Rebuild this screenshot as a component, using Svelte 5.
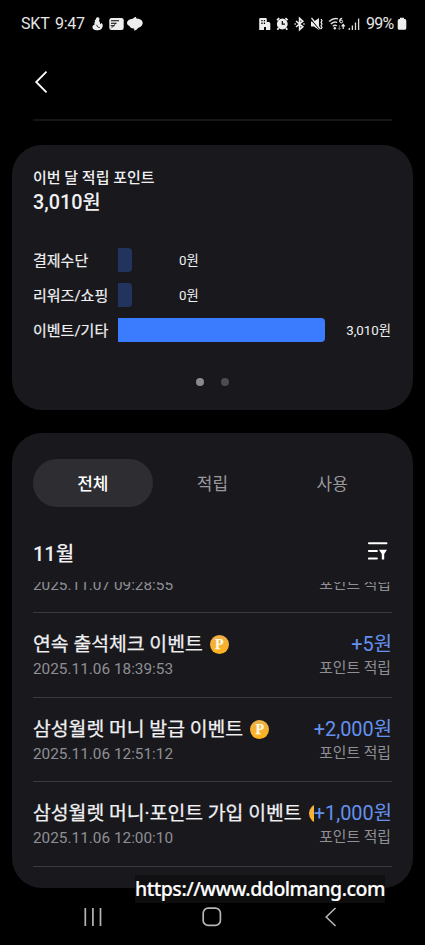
<script>
  let tab = $state('전체')

  const tabs = ['전체', '적립', '사용']

  const bars = [
    { name: '결제수단', value: '0원', width: 14, empty: true },
    { name: '리워즈/쇼핑', value: '0원', width: 14, empty: true },
    { name: '이벤트/기타', value: '3,010원', width: 207, empty: false }
  ]

  const items = [
    { title: '연속 출석체크 이벤트', date: '2025.11.06 18:39:53', amount: '+5원' },
    { title: '삼성월렛 머니 발급 이벤트', date: '2025.11.06 12:51:12', amount: '+2,000원' },
    { title: '삼성월렛 머니·포인트 가입 이벤트', date: '2025.11.06 12:00:10', amount: '+1,000원' }
  ]
</script>

<div class="screen">
  <div class="status">
    <div class="status-left">
      <span class="carrier">SKT</span>
      <span class="clock">9:47</span>
      <svg class="apps" width="54" height="18" viewBox="0 0 54 18" fill="#eee">
        <!-- tap / water drop -->
        <path d="M6.300 2.300c1.700-.2 2.700 1.300 2 2.700-.3.600-.3 1 .1 1.500.8.900.9 1.900.5 3l1.700-1.500 1 1.200c.5 3.700-1.300 5.800-4.600 6-3.600.2-6-1.500-5.500-3.800.3-1.200 1.300-1.600 2.300-2-.7-1.300-.5-2.300.4-3.200l-.6-1.200 1.300-.4c.1-1.200.5-2 1.400-2.300z" />
        <path d="M5.800 9.800c.1 1.700 1.200 2.800 3 2.700" fill="none" stroke="#000" stroke-width=".8" />
        <!-- news card -->
        <rect x="18.300" y="3" width="14.400" height="12" rx="2.200" />
        <path d="M20 5.700h8M20 8.300h5.500M19.600 10.800h4" stroke="#000" stroke-width="1.100" />
        <path d="M20.300 13.300l4.500-5" stroke="#000" stroke-width=".7" />
        <!-- swirl -->
        <path d="M45 1.800l.3 1.700c3.300.1 5.700 1.300 6.300 3.500.6 2.700-1.500 5.200-4.600 5.900-.9 1.300-2.100 2.300-3.700 2.800l-.2-2.200c-2.500.2-4.300-.8-4.500-2.400-1.500-.4-2.500-1.500-2.600-3C36.200 5 39 4 41.300 4 42.300 3 43.500 2.200 45 1.800z" />
      </svg>
    </div>
    <div class="status-right">
      <svg width="104" height="18" viewBox="0 0 104 18" fill="#eee">
        <!-- buildings -->
        <path d="M1.200 4.200q0-1.200 1.200-1.200h5.200q1.200 0 1.200 1.200V7h2q1.500 0 1.500 1.500V15H8v-3H6v3H1.200z" />
        <path d="M3.300 5h1.300v1.300H3.300zM5.800 5h1.300v1.300H5.800zM3.300 7.600h1.300v1.300H3.300zM5.800 7.600h1.300v1.300H5.800z" fill="#000" />
        <!-- alarm -->
        <circle cx="24.300" cy="9" r="5.400" />
        <path d="M19 5.200l2.200-2M29.600 5.200l-2.200-2M20.600 13l-1.200 1.800M28 13l1.200 1.800" stroke="#eee" stroke-width="1.800" />
        <path d="M24.300 6v3.200h2.600" fill="none" stroke="#000" stroke-width="1.200" />
        <!-- bluetooth -->
        <path d="M38 6l6.800 5.800-3.200 2.900V3.300l3.200 2.900L38 12M36.500 9h1.300M45.300 9h1.300" fill="none" stroke="#eee" stroke-width="1.600" />
        <!-- muted sound -->
        <path d="M53 6.600h3l5-3.600v12l-5-3.600h-3z" />
        <path d="M53 4.500l9 10.500" stroke="#000" stroke-width="1.100" />
        <path d="M53.500 3l9 11" stroke="#eee" stroke-width="1.200" />
        <path d="M63 4l1 1.700-1 1.700 1 1.700-1 1.700 1 1.700-1 1.500" fill="none" stroke="#eee" stroke-width="1.200" />
        <!-- wifi 6 -->
        <path d="M71 6.500q4.500-4 9-2.700M72.800 9q3.300-3 6.500-1.600M74.800 11.300q2-1.800 4-.5" fill="none" stroke="#ddd" stroke-width="1.400" />
        <circle cx="76.800" cy="13.300" r="1.200" />
        <path d="M84.200 3.400q-2.600 0-2.600 3.300" fill="none" stroke="#eee" stroke-width="1.100" />
        <circle cx="83.200" cy="6.500" r="1.400" fill="none" stroke="#eee" />
        <path d="M81.300 10v4.500M79.800 13l1.500 1.700 1.500-1.700" fill="none" stroke="#777" />
        <path d="M85.200 14V9.500M83.600 11.300l1.600-1.800 1.600 1.800" fill="none" stroke="#eee" stroke-width="1.200" />
        <!-- signal -->
        <path d="M91.300 13v2M94.400 10.500V15M97.500 7.500V15M100.600 3.500V15" stroke="#ddd" stroke-width="1.300" />
      </svg>
      <span class="percent">99%</span>
      <svg class="battery" width="10" height="14" viewBox="0 0 10 14">
        <path d="M3 .8h4v1.300h.7q1.600 0 1.600 1.600v7.500q0 1.600-1.600 1.600H2.300Q.7 12.800.7 11.200V3.700q0-1.600 1.600-1.600H3z" fill="#eee" />
      </svg>
    </div>
  </div>

  <div class="topbar">
    <svg width="14" height="24" viewBox="0 0 14 24">
      <path d="M12.500 1.700L2.200 12l10.300 10.300" fill="none" stroke="#fff" stroke-width="1.800" />
    </svg>
  </div>
  <div class="topline"></div>

  <section class="card summary">
    <p class="label">이번 달 적립 포인트</p>
    <p class="total">3,010원</p>

    <div class="chart">
      {#each bars as bar}
        <div class="bar-row">
          <span class="bar-name">{bar.name}</span>
          <div class="track">
            <div class="bar" class:empty={bar.empty} style="width: {bar.width}px"></div>
            <span class="bar-value" class:small={bar.empty}>{bar.value}</span>
          </div>
        </div>
      {/each}
    </div>

    <div class="dots">
      <i class="on"></i>
      <i></i>
    </div>
  </section>

  <section class="card history">
    <div class="tabs">
      {#each tabs as name}
        <button class:active={tab === name} onclick={() => (tab = name)}>{name}</button>
      {/each}
    </div>

    <div class="month">
      <h2>11월</h2>
      <svg width="20" height="20" viewBox="0 0 20 20">
        <path d="M.9 2.200h17.600M.9 9.900h8M.9 17.600h8" fill="none" stroke="#fff" stroke-width="2" stroke-linecap="round" />
        <path d="M11 8.800h8l-2.800 4.200v5.500h-2.400V13z" fill="#fff" />
      </svg>
    </div>

    <div class="list">
      <!-- row scrolled under the month header -->
      <div class="row cut">
        <div class="meta">
          <span>2025.11.07 09:28:55</span>
          <span class="kind">포인트 적립</span>
        </div>
      </div>
      {#each items as item}
        <div class="row">
          <div class="main">
            <div class="title">
              <span>{item.title}</span>
              <span class="coin">P</span>
            </div>
            <span class="amount">{item.amount}</span>
          </div>
          <div class="meta">
            <span>{item.date}</span>
            <span class="kind">포인트 적립</span>
          </div>
        </div>
      {/each}
    </div>
  </section>

  <nav class="navbar">
    <svg width="20" height="20" viewBox="0 0 20 20">
      <path d="M2.300 1v18M9.900 1v18M17.500 1v18" stroke="#b5b5b5" stroke-width="1.700" />
    </svg>
    <svg width="20" height="20" viewBox="0 0 20 20">
      <rect x="1.200" y="1.200" width="17.200" height="17.200" rx="5" fill="none" stroke="#b5b5b5" stroke-width="1.700" />
    </svg>
    <svg width="20" height="20" viewBox="0 0 20 20">
      <path d="M14.500 1L5.200 10l9.300 9" fill="none" stroke="#b5b5b5" stroke-width="1.600" />
    </svg>
  </nav>

  <div class="watermark">https://www.ddolmang.com</div>
</div>

<style>
  :global(body) {
    background: #000;
  }

  .screen {
    position: relative;
    width: 425px;
    height: 945px;
    display: flex;
    flex-direction: column;
    overflow: hidden;
    background: #000;
    color: #f0f0f2;
    font-family: Roboto, "Noto Sans CJK KR", sans-serif;
  }

  p, h2 {
    margin: 0;
  }

  svg {
    display: block;
    flex: none;
  }

  /* status bar */
  .status {
    height: 48px;
    display: flex;
    align-items: center;
    justify-content: space-between;
    padding: 0 18px 0 21px;
    box-sizing: border-box;
    font-size: 16px;
    line-height: 20px;
    color: #e6e6e6;
  }

  .status-left, .status-right {
    display: flex;
    align-items: center;
  }

  .carrier {
    width: 34px;
    letter-spacing: -0.2px;
  }

  .clock {
    width: 36px;
    letter-spacing: -0.3px;
  }

  .percent {
    width: 31px;
    letter-spacing: -0.7px;
  }

  .status-right svg:first-child {
    margin-right: 4px;
  }

  /* top bar */
  .topbar {
    height: 71px;
    display: flex;
    align-items: center;
    padding: 0 34px 4px;
    box-sizing: border-box;
  }

  .topline {
    height: 2px;
    flex: none;
    margin: 0 33px 24px;
    border-radius: 2px;
    background: #161617;
  }

  .card {
    margin: 0 12px;
    padding: 0 21px;
    box-sizing: border-box;
    flex: none;
    border-radius: 30px;
    background: #19191d;
  }

  /* monthly summary */
  .summary {
    height: 265px;
    padding-top: 22px;
    margin-bottom: 23px;
  }

  .label {
    font-size: 15px;
    font-weight: 500;
    line-height: 22px;
  }

  .total {
    padding-top: 1px;
    font-size: 19.8px;
    font-weight: 500;
    line-height: 26px;
  }

  .chart {
    display: flex;
    flex-direction: column;
    gap: 11px;
    margin-top: 32px;
  }

  .bar-row {
    display: flex;
    align-items: center;
    height: 24px;
  }

  .bar-name {
    width: 85px;
    padding-top: 2px;
    font-size: 15px;
    line-height: 24px;
    white-space: nowrap;
    -webkit-text-stroke: 0.2px;
  }

  .track {
    flex: 1;
    display: flex;
    align-items: center;
  }

  .bar {
    height: 24px;
    border-radius: 0 4px 4px 0;
    background: #3b7cff;
  }

  .bar.empty {
    background: #22345e;
  }

  .bar-value {
    margin-left: auto;
    padding: 1px 1px 0 0;
    font-size: 13.3px;
    line-height: 24px;
  }

  .bar-value.small {
    margin-left: 47px;
  }

  .dots {
    display: flex;
    justify-content: center;
    gap: 17px;
    margin-top: 36px;
  }

  .dots i {
    width: 8px;
    height: 8px;
    border-radius: 50%;
    background: #4c4c50;
  }

  .dots i.on {
    background: #89898e;
  }

  /* history */
  .history {
    height: 455px;
    padding-top: 26px;
    overflow: hidden;
  }

  .tabs {
    display: flex;
  }

  .tabs button {
    flex: 1;
    height: 48px;
    padding: 0 0 1px;
    border: 0;
    border-radius: 24px;
    background: none;
    color: #98989d;
    font-family: inherit;
    font-size: 17px;
  }

  .tabs button.active {
    background: #2d2d32;
    color: #fff;
    font-weight: 500;
  }

  .month {
    display: flex;
    align-items: center;
    justify-content: space-between;
    height: 75px;
    padding: 0 4px 0 0;
  }

  .month h2 {
    padding-top: 19px;
    font-size: 20px;
    font-weight: 500;
    line-height: 26px;
  }

  .month svg {
    margin-top: 12px;
  }

  .row {
    height: 84.7px;
    padding-top: 18px;
    box-sizing: border-box;
    border-bottom: 1px solid #3a3a3e;
  }

  .row.cut {
    height: 31px;
    padding: 0;
    overflow: hidden;
  }

  .row.cut .meta {
    margin-top: -8px;
  }

  .main {
    display: flex;
    height: 27px;
    line-height: 27px;
    font-size: 19.35px;
    white-space: nowrap;
  }

  .title {
    flex: 1;
    min-width: 0;
    display: flex;
    align-items: center;
    gap: 7px;
    overflow: hidden;
    -webkit-text-stroke: 0.25px;
  }

  .coin {
    flex: none;
    width: 19px;
    height: 19px;
    border-radius: 50%;
    background: linear-gradient(#eeb04a, #ffb31a);
    color: #fff8e6;
    font-family: "Liberation Serif", serif;
    font-size: 14px;
    font-weight: 700;
    line-height: 19px;
    text-align: center;
  }

  .amount {
    color: #6491ee;
    font-size: 19.9px;
  }

  .meta {
    display: flex;
    justify-content: space-between;
    height: 22px;
    color: #8f8f94;
    font-size: 15.35px;
    line-height: 22px;
  }

  .kind {
    margin: -1px 1px 0 0;
    font-size: 14.8px;
  }

  /* navigation */
  .navbar {
    flex: 1;
    display: flex;
    align-items: center;
    justify-content: space-between;
    padding: 0 84px 0 83px;
  }

  .watermark {
    position: absolute;
    left: 135px;
    top: 875px;
    width: 250px;
    height: 28px;
    background: rgba(15, 15, 17, 0.85);
    color: #fff;
    font-family: "Noto Sans", "Open Sans", sans-serif;
    font-size: 19.5px;
    font-weight: 500;
    letter-spacing: -0.47px;
    line-height: 28px;
    white-space: nowrap;
    -webkit-text-stroke: 0.2px;
  }
</style>
